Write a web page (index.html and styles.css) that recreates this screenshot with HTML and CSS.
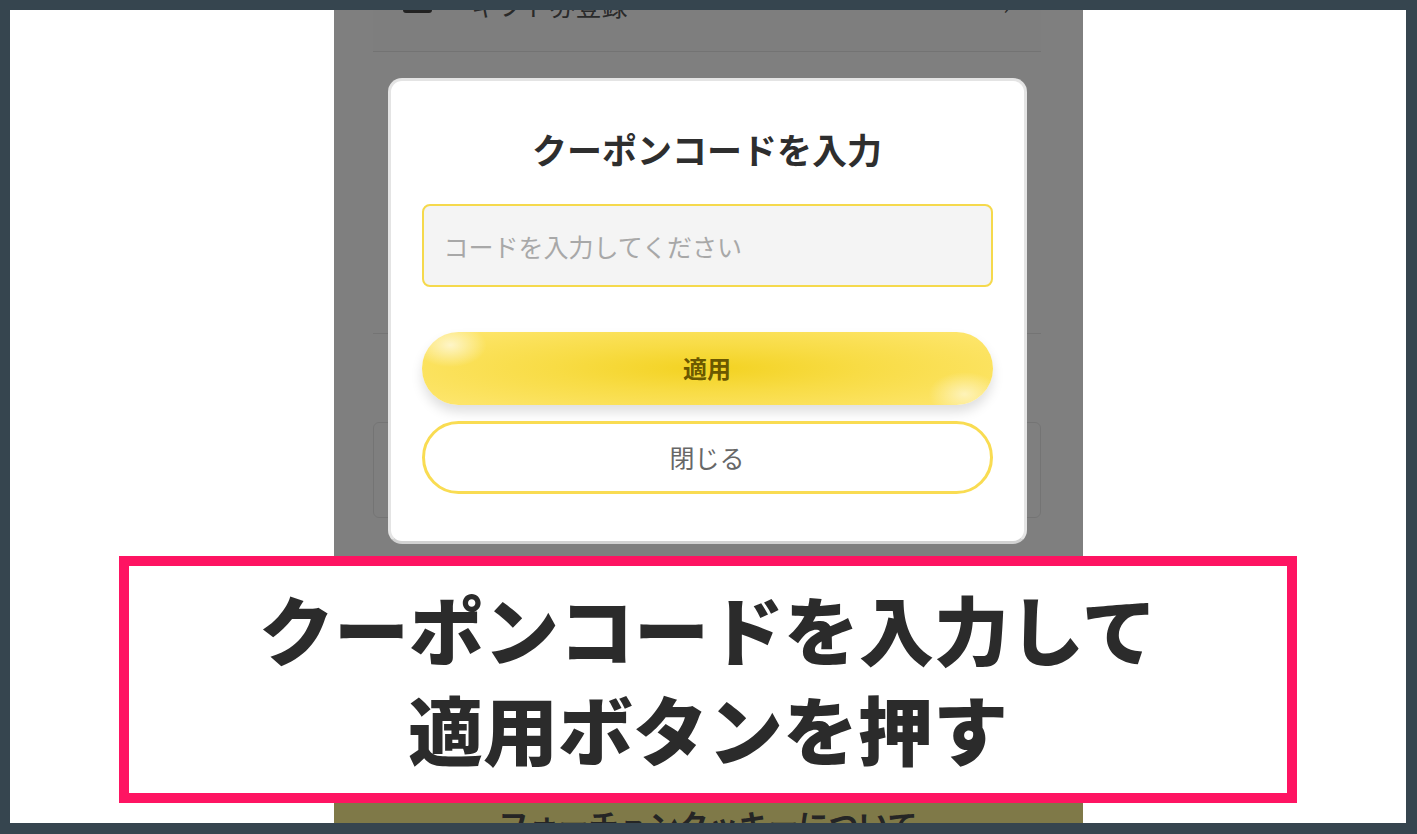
FILE: index.html
```html
<!DOCTYPE html>
<html>
  <head>
    <title>クーポンコードを入力</title>
    <link rel="stylesheet" href="styles.css">
  </head>
  <body>
    <div class="frame">
      <div class="canvas">

        <div class="phone">
          <div class="gift-row">
            <span class="gift-icon"></span>
            <span class="gift-label">ギフト券登録</span>
            <span class="gift-chevron">›</span>
          </div>
          <div class="block block-a"></div>
          <div class="block block-b"></div>
          <div class="banner">フォーチュンクッキーについて</div>

          <div class="dim"></div>

          <div class="modal">
            <h2 class="modal-title">クーポンコードを入力</h2>
            <input class="code-input" placeholder="コードを入力してください">
            <button class="btn-apply">適用</button>
            <button class="btn-close">閉じる</button>
          </div>
        </div>

        <div class="caption">クーポンコードを入力して<br>適用ボタンを押す</div>
      </div>
    </div>
  </body>
</html>
```

FILE: styles.css
```css
html, body { margin: 0; padding: 0; }
body { font-family: "Noto Sans CJK JP", "Noto Sans", sans-serif; }

.frame {
    width: 1417px;
    height: 834px;
    box-sizing: border-box;
    padding: 10px 11px 11px 10px;
    background: #36454f;
}
.canvas {
    position: relative;
    height: 100%;
    background: #fff;
    display: flex;
    justify-content: center;
}

/* phone screenshot, dimmed behind the dialog */
.phone {
    position: relative;
    width: 749px;
    height: 100%;
    overflow: hidden;
    background: #fff;
    display: flex;
    flex-direction: column;
    padding: 0 42px 0 39px;
    box-sizing: border-box;
}
.gift-row {
    height: 82px;
    margin-top: -40px;
    padding: 20px 30px 0 30px;
    box-sizing: border-box;
    display: flex;
    align-items: flex-start;
    gap: 40px;
    border-bottom: 1px solid #e6e6e6;
    background: #fdfdfd;
}
.gift-icon {
    width: 29px;
    height: 22px;
    margin-top: 1px;
    border-radius: 3px;
    background: #444;
}
.gift-label { font-size: 26px; line-height: 30px; color: #555; flex-grow: 1; }
.gift-chevron { font-size: 24px; line-height: 30px; color: #555; }

.block { border-top: 1px solid #e9e9e9; }
.block-a { margin-top: 281px; height: 88px; }
.block-b { height: 94px; border: 1px solid #e9e9e9; border-radius: 6px; }

.banner {
    margin: auto -42px -26px -39px;
    height: 52px;
    background: #fff290;
    color: #4a4a4a;
    font-size: 30px;
    font-weight: 700;
    line-height: 52px;
    text-align: center;
}

.dim {
    position: absolute;
    top: 0; left: 0; right: 0; bottom: 0;
    background: rgba(0, 0, 0, 0.5);
}

/* dialog */
.modal {
    position: absolute;
    top: 68px;
    left: 54px;
    width: 639px;
    box-sizing: border-box;
    padding: 47px 31px 47px;
    background: #fff;
    border: 3px solid #e4e4e4;
    border-bottom-color: #d2d2d2;
    border-radius: 14px;
    display: flex;
    flex-direction: column;
}
.modal-title {
    margin: 0 0 34px;
    font-size: 35px;
    line-height: 42px;
    font-weight: 700;
    color: #2e2e2e;
    text-align: center;
}
.code-input {
    height: 83px;
    box-sizing: border-box;
    padding: 0 20px;
    border: 2px solid #f5d94c;
    border-radius: 8px;
    background: #f4f4f4;
    font-family: inherit;
    font-size: 25px;
    outline: none;
}
.code-input::placeholder { color: #a8a8a8; }

.btn-apply, .btn-close {
    height: 73px;
    border-radius: 37px;
    font-family: inherit;
    font-size: 24px;
    cursor: pointer;
}
.btn-apply {
    margin-top: 45px;
    border: none;
    padding-bottom: 3px;
    color: #6b5800;
    font-weight: 700;
    background:
        radial-gradient(ellipse 36px 22px at 5% 18%, rgba(255,255,255,0.65), rgba(255,255,255,0)),
        radial-gradient(ellipse 36px 22px at 95% 85%, rgba(255,255,255,0.55), rgba(255,255,255,0)),
        radial-gradient(ellipse 60% 70% at 50% 50%, #f3d221 0%, #f8dc45 45%, #fde56a 100%);
    box-shadow: 0 7px 12px rgba(0, 0, 0, 0.13);
}
.btn-close {
    margin-top: 16px;
    border: 3px solid #f9dc52;
    padding-bottom: 3px;
    background: #fff;
    color: #676767;
    font-size: 25px;
}

/* annotation */
.caption {
    position: absolute;
    left: 109px;
    top: 546px;
    width: 1178px;
    height: 247px;
    box-sizing: border-box;
    padding-bottom: 4px;
    border: 10px solid #fe1462;
    background: #fff;
    display: flex;
    align-items: center;
    justify-content: center;
    text-align: center;
    font-size: 75px;
    line-height: 100px;
    font-weight: 900;
    color: #2b2b2b;
}
```
